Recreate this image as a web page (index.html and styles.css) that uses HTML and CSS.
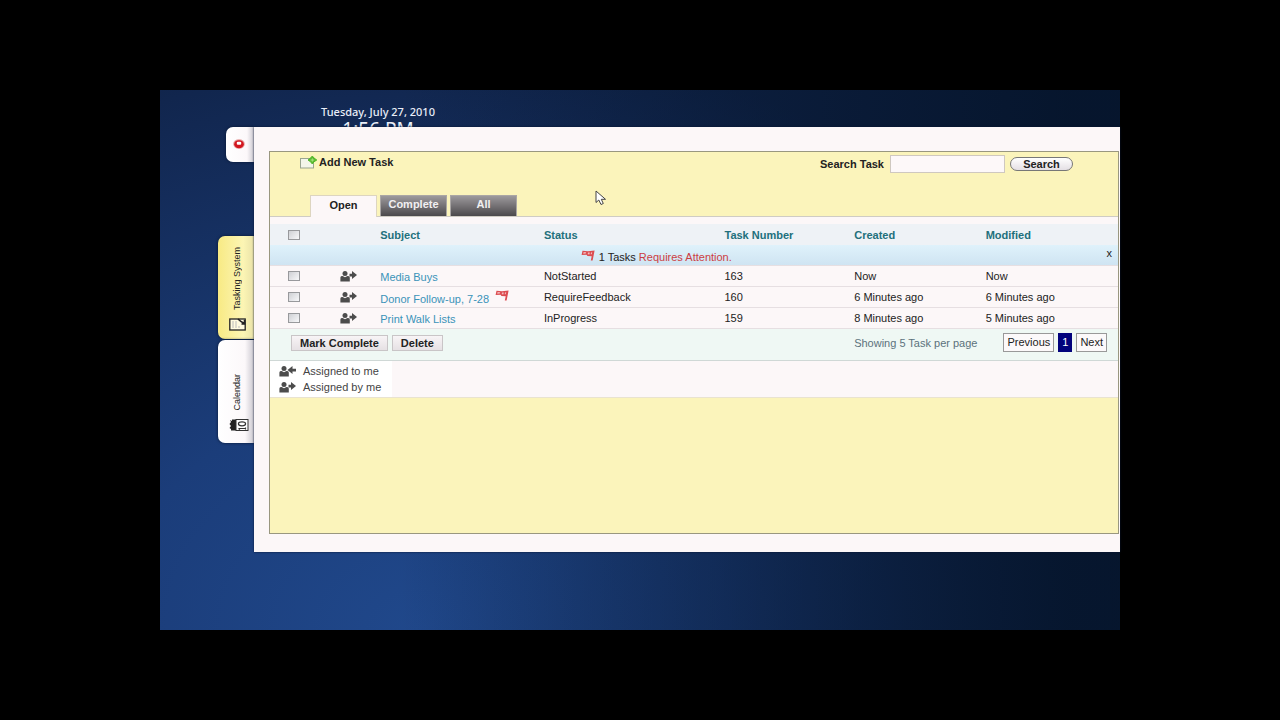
FILE: index.html
```html
<!DOCTYPE html>
<html lang="en">
<head>
<meta charset="utf-8">
<title>Tasking System</title>
<link rel="stylesheet" href="styles.css">
</head>
<body>
<svg class="defs" aria-hidden="true">
  <symbol id="by-me" viewBox="0 0 17 11">
    <circle cx="5" cy="2.6" r="2.5"/><path d="M.4 10.500V6.4Q.4 5 2.600 5L5 6.200L7.400 5Q9.800 5 9.800 6.400V10.500Z"/><path d="M9.500 2.800H12V0L17 4L12 8V5.400H9.500Z"/>
  </symbol>
  <symbol id="to-me" viewBox="0 0 17 11">
    <circle cx="5" cy="2.6" r="2.5"/><path d="M.4 10.500V6.4Q.4 5 2.600 5L5 6.200L7.400 5Q9.800 5 9.800 6.400V10.500Z"/><path d="M17 2.800H13.500V0L8.500 4L13.500 8V5.400H17Z"/>
  </symbol>
  <symbol id="flag" viewBox="0 0 14 12">
    <path d="M1.500 .8L7 1.200L13.600 .6L11.600 10.600H9.800L10.700 6.200L6.500 6L5.500 4.800L.6 5Z" fill="#dc4c50"/><path d="M2.600 2L5.200 2.200L4.800 3.600L2.200 3.700ZM7 2.600L8.800 2.500L8.400 4.600L6.700 4.300ZM10 2.400L11.200 2.300L10.800 4.300L9.700 4.300Z" fill="#f3bcbe"/>
  </symbol>
</svg>
<div class="stage">
  <header class="clock">
    <div class="date">Tuesday, July 27, 2010</div>
    <div class="time">1:56 PM</div>
  </header>
  <div class="shell">
    <nav class="rail">
      <button class="side close" aria-label="Close panel">
        <svg width="12" height="10" viewBox="0 0 12 10"><ellipse cx="6" cy="5" rx="5.800" ry="4.800" fill="#e6a0a0"/><ellipse cx="6" cy="5.200" rx="4.800" ry="4" fill="#d2161e"/><rect x="3.800" y="2.800" width="4.400" height="3" rx="1" fill="#fff"/></svg>
      </button>
      <button class="side tall active">
        <svg width="18" height="14" viewBox="0 0 18 14" fill="none" stroke="#222"><rect x=".8" y="2" width="15.4" height="11" stroke-width="1.3" fill="#fffbe0"/><path d="M4 4V11M7 4V11M10 9V11" stroke="#bbb"/><path d="M9 2L11.500 4.200L16 7M12.500 7H15.500V3" stroke-width="1.600"/></svg>
        <span>Tasking System</span>
      </button>
      <button class="side tall">
        <svg width="20" height="14" viewBox="0 0 20 14"><path d="M1 2L3 3V1.500H7V12.500H2V11L.5 10L2 8L.5 6L2 4Z" fill="#222"/><rect x="7" y="1.500" width="12" height="11" fill="#fff" stroke="#333"/><path d="M9.500 10.500H16.500M11 11.500L9.500 10.500M16.500 9.500V11.500" fill="none" stroke="#333" stroke-width="1.200"/><ellipse cx="13" cy="5.800" rx="3.600" ry="2" fill="none" stroke="#333" stroke-width="1.200"/></svg>
        <span>Calendar</span>
      </button>
    </nav>
    <main class="panel">
      <div class="box">
        <div class="toolbar">
          <button class="add">
            <svg width="17" height="13" viewBox="0 0 17 13"><rect x=".5" y="2.500" width="13" height="9.500" fill="#f4f6ea" stroke="#9aa590"/><path d="M12.300 0L14 2L16.800 4L14 5.800L12.300 8L10.600 5.800L8 4L10.600 2Z" fill="#54b82c" stroke="#54b82c"/><path d="M10.500 4H14.200M12.300 2.300V5.700" stroke="#a5e27d"/></svg>
            Add New Task
          </button>
          <form class="search">
            <label for="q">Search Task</label>
            <input id="q" type="text">
            <button type="button">Search</button>
          </form>
        </div>
        <div class="tabs">
          <button class="on">Open</button>
          <button>Complete</button>
          <button>All</button>
        </div>
        <table>
          <colgroup><col class="c1"><col class="c2"><col class="c3"><col class="c4"><col class="c5"><col class="c6"><col></colgroup>
          <thead>
            <tr><th><input type="checkbox" aria-label="Select all"></th><th></th><th>Subject</th><th>Status</th><th>Task Number</th><th>Created</th><th>Modified</th></tr>
          </thead>
          <tbody>
            <tr class="notice"><td colspan="7"><div class="alert"><p><svg width="14" height="12"><use href="#flag"/></svg> <span>1 Tasks <em>Requires Attention.</em></span></p><button aria-label="Dismiss">x</button></div></td></tr>
            <tr><td><input type="checkbox" aria-label="Media Buys"></td><td><svg width="17" height="11"><use href="#by-me"/></svg></td><td><a href="#">Media Buys</a></td><td>NotStarted</td><td>163</td><td>Now</td><td>Now</td></tr>
            <tr><td><input type="checkbox" aria-label="Donor Follow-up"></td><td><svg width="17" height="11"><use href="#by-me"/></svg></td><td><a href="#">Donor Follow-up, 7-28</a> <svg class="mark" width="14" height="12"><use href="#flag"/></svg></td><td>RequireFeedback</td><td>160</td><td>6 Minutes ago</td><td>6 Minutes ago</td></tr>
            <tr><td><input type="checkbox" aria-label="Print Walk Lists"></td><td><svg width="17" height="11"><use href="#by-me"/></svg></td><td><a href="#">Print Walk Lists</a></td><td>InProgress</td><td>159</td><td>8 Minutes ago</td><td>5 Minutes ago</td></tr>
          </tbody>
        </table>
        <div class="actions">
          <button>Mark Complete</button>
          <button>Delete</button>
          <span class="showing">Showing 5 Task per page</span>
          <a href="#">Previous</a>
          <a href="#" class="current">1</a>
          <a href="#">Next</a>
        </div>
        <div class="legend">
          <ul>
            <li><svg width="17" height="11"><use href="#to-me"/></svg>Assigned to me</li>
            <li><svg width="17" height="11"><use href="#by-me"/></svg>Assigned by me</li>
          </ul>
        </div>
      </div>
    </main>
  </div>
  <svg class="cursor" width="12" height="16" viewBox="0 0 12 16"><path d="M1 1V12.500L3.800 10L6 14.500L8.300 13.500L6.300 9.300H10.500Z" fill="#fff" stroke="#444"/></svg>
</div>
</body>
</html>
```
FILE: styles.css
```css
* { box-sizing: border-box; }
body {
  margin: 0;
  padding: 90px 12.5%;
  background: #000;
  color: #222;
  font: 11px/14px "Liberation Sans", Arial, sans-serif;
}
button, input { font: inherit; color: inherit; margin: 0; }
svg { display: block; }
.defs { position: absolute; width: 0; height: 0; }
.stage {
  position: relative;
  padding-bottom: 78px;
  background:
    linear-gradient(90deg, rgba(5, 20, 42, 0) 25%, rgba(5, 20, 42, .9) 95%),
    radial-gradient(ellipse 80% 110% at 27% 100%, #20488b 0%, #1b3d7a 40%, #132a56 85%, #10244a 100%);
}
.clock {
  height: 37px;
  width: 436px;
  padding: 15px 0 0;
  overflow: hidden;
  text-align: center;
  color: #e9eef8;
  font-family: "Noto Sans", sans-serif;
}
.date { font-size: 11px; font-weight: 500; line-height: 14px; }
.time { font-size: 19px; line-height: 20px; }

.shell { display: flex; }
.rail {
  flex: none;
  width: 94px;
  display: flex;
  flex-direction: column;
  align-items: flex-end;
}
.side {
  display: flex;
  border: 0;
  border-radius: 7px 0 0 7px;
  background: linear-gradient(90deg, #fff, #fcf8fa 75%, #cbc8d0);
  box-shadow: 0 0 3px #08142f;
}
.close {
  width: 28px;
  height: 35px;
  margin-bottom: 74px;
  padding: 12px 0 0 7px;
}
.tall {
  width: 36px;
  height: 103px;
  margin-bottom: 1px;
  padding: 0 0 11px 11px;
  flex-direction: column;
  justify-content: flex-end;
  align-items: flex-start;
}
.tall svg { order: 2; }
.tall span {
  writing-mode: vertical-rl;
  transform: rotate(180deg);
  margin-bottom: 7px;
  font-size: 9px;
  line-height: 16px;
  white-space: nowrap;
}
.tall.active { padding-bottom: 8px; background: linear-gradient(90deg, #f8ea84, #fcf5b4 70%, #e9e2a8); }

.panel {
  flex: 1;
  min-width: 0;
  padding: 24px 1px 18px 15px;
  background: #fcf7f8;
  box-shadow: 0 0 2px #08142f;
}
.box {
  min-height: 383px;
  border: 1px solid #99977f;
  background: #fbf4bb;
}
.toolbar {
  display: flex;
  justify-content: space-between;
  height: 43px;
  padding: 3px 45px 0 30px;
  font-weight: bold;
}
.add {
  display: flex;
  align-items: center;
  align-self: flex-start;
  gap: 2px;
  padding: 0;
  border: 0;
  background: none;
  font-weight: bold;
}
.search { display: flex; align-items: center; align-self: flex-start; }
.search input {
  width: 115px;
  height: 18px;
  margin: 0 5px 0 6px;
  border: 1px solid #cfc8c0;
  background: #fdf8f9;
}
.search button {
  width: 63px;
  height: 14px;
  padding: 0;
  border: 1px solid #777;
  border-radius: 7px;
  background: linear-gradient(#fff, #e4dfe4);
  line-height: 11px;
}
.tabs {
  display: flex;
  gap: 3px;
  padding-left: 40px;
  border-bottom: 1px solid #cfccc4;
}
.tabs button {
  width: 67px;
  height: 21px;
  padding: 0 0 4px;
  border: 1px solid #aaa6a4;
  border-bottom: 0;
  background: linear-gradient(#9c999c, #747174 50%, #4b494c);
  color: #f1eff1;
  font-weight: bold;
}
.tabs .on {
  margin-bottom: -1px;
  height: 22px;
  border-color: #ddd5c0;
  background: #fcf7f8;
  color: #222;
}
table {
  width: 100%;
  table-layout: fixed;
  border-collapse: separate;
  border-spacing: 0;
  border-top: 7px solid #fcf7f8;
  background: #fcf7f8;
}
.c1 { width: 5.5%; }
.c2 { width: 7.5%; }
.c3 { width: 19.3%; }
.c4 { width: 21.3%; }
.c5 { width: 15.3%; }
.c6 { width: 15.5%; }
th, td { height: 21px; padding: 0; text-align: left; white-space: nowrap; line-height: 14px; }
th { background: #eef2f6; color: #22707c; }
td { border-bottom: 1px solid #e6dfe2; }
td:first-child, th:first-child { padding-left: 18px; }
td:nth-child(2) { padding-left: 23px; }
td svg, li svg { fill: #4c4c4c; }
a { color: #3a93b8; text-decoration: none; }
td a { position: relative; top: 1px; }
.mark { display: inline-block; margin-left: 3px; }
input[type="checkbox"] {
  appearance: none;
  display: block;
  width: 12px;
  height: 10px;
  border: 1px solid #98999c;
  background: linear-gradient(135deg, #cfd0d4, #f8f8fa);
}
.notice td:first-child { padding: 0; background: linear-gradient(#dff2fb, #cfe4f2); }
.alert { display: flex; align-items: center; padding-right: 6px; }
.alert p {
  flex: 1;
  display: flex;
  justify-content: center;
  gap: 4px;
  margin: 0;
  padding: 4px 64px 0 0;
}
.alert em { color: #cc3d42; font-style: normal; }
.alert button { padding: 0 0 4px; border: 0; background: none; line-height: 12px; }
.actions {
  display: flex;
  align-items: center;
  gap: 4px;
  padding: 4px 11px 8px 21px;
  border-bottom: 1px solid #cfd8d6;
  background: #eff8f4;
}
.actions button {
  height: 16px;
  padding: 0 8px;
  border: 1px solid #c9c5c7;
  background: linear-gradient(#f8f4f6, #e6e1e4);
  line-height: 14px;
  font-weight: bold;
}
.showing { margin: 0 22px 0 auto; color: #5c727c; }
.actions a {
  padding: 1px 3px;
  border: 1px solid #999;
  background: #fcf9fa;
  line-height: 15px;
  color: #222;
}
.actions .current { border-color: #02027c; background: #02027c; color: #fff; }
.legend { border-bottom: 1px solid #e9e3d0; background: #fcf7f8; }
.legend ul {
  width: 122px;
  margin: 0;
  padding: 2px 0 2px 9px;
  background: #fff;
  list-style: none;
  line-height: 16px;
  white-space: nowrap;
  color: #444;
}
.legend li { display: flex; align-items: center; gap: 7px; }
.cursor { position: absolute; left: 45.3%; top: 100px; }
```
